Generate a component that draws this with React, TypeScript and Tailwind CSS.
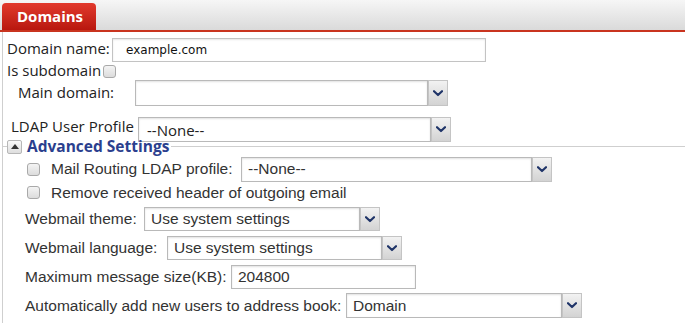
import React from "react";

const Chevron = () => (
  <svg width="10" height="7" viewBox="0 0 10 7">
    <path d="M1 1.2 L5 5 L9 1.2" fill="none" stroke="#1f3468" strokeWidth="2.2" strokeLinecap="round" strokeLinejoin="round" />
  </svg>
);

function Select({ w, h = 25, text, textClass = "" }: { w: number; h?: number; text?: string; textClass?: string }) {
  return (
    <div className="flex" style={{ height: h }}>
      <div
        className={`flex items-center border border-[#b9b9b9] bg-white pl-[6px] shadow-[inset_0_1px_2px_rgba(0,0,0,0.12)] ${textClass}`}
        style={{ width: w }}
      >
        {text}
      </div>
      <div className="flex w-[20px] items-center justify-center border border-[#c4c4c4] bg-gradient-to-b from-[#f2f2f2] to-[#d3d3d3]">
        <Chevron />
      </div>
    </div>
  );
}

const Check = () => (
  <div className="h-[13px] w-[13px] rounded-[3px] border border-[#a9a9a9] bg-gradient-to-b from-[#f4f4f4] to-[#dcdcdc]" />
);

export default function App() {
  const top = "font-['Open_Sans',sans-serif] text-[15px] text-[#222] leading-none";
  const low = "font-['Liberation_Sans',Arial,sans-serif] text-[15.5px] text-[#333] leading-none";
  return (
    <div className="h-[323px] w-[685px] overflow-hidden bg-white">
      <div className="flex h-[30px] items-end bg-gradient-to-b from-[#f6f6f6] to-[#dadada] pl-[2px]">
        <div className="flex h-[27px] w-[94px] items-center rounded-t-[4px] bg-gradient-to-b from-[#e2392c] to-[#b8160e] pl-[15px] font-['Open_Sans',sans-serif] text-[15px] font-bold text-white">
          Domains
        </div>
      </div>
      <div className="h-[2px] bg-[#c9341f]" />
      <div className="ml-[2px] border-l border-[#cfcfcf] pt-[6px]">
        <div className={`flex items-center ${top}`}>
          <span className="ml-[4px] -mt-[4px] w-[105px]">Domain name:</span>
          <div className="flex h-[24px] w-[374px] items-center border border-[#c3c3c3] pl-[13px] font-['DejaVu_Sans',sans-serif] text-[12px] text-[#111] shadow-[inset_0_1px_2px_rgba(0,0,0,0.1)]">
            example.com
          </div>
        </div>
        <div className={`mt-[1px] flex items-center ${top}`}>
          <span className="ml-[4px]">Is subdomain</span>
          <div className="ml-[2px] mt-[1px]">
            <Check />
          </div>
        </div>
        <div className={`mt-[2px] flex items-center ${top}`}>
          <span className="ml-[15px] -mt-[2px] w-[117px]">Main domain:</span>
          <Select w={293} h={26} />
        </div>
        <div className={`mt-[11px] flex items-center ${top}`}>
          <span className="ml-[8px] -mt-[6px] w-[127px]">LDAP User Profile</span>
          <Select w={293} h={25} text="--None--" textClass="pl-[8px] pt-[2px]" />
        </div>
        <fieldset className="mt-[-3px] border-t border-[#cfcfcf] pb-[10px]">
          <legend className="ml-[4px] flex items-center pr-[2px]">
            <div className="flex h-[14px] w-[15px] items-center justify-center rounded-[2px] border border-[#b7b7b7] bg-gradient-to-b from-[#fafafa] to-[#dedede]">
              <svg width="8" height="5" viewBox="0 0 8 5">
                <path d="M0 5 L4 0 L8 5 Z" fill="#333" />
              </svg>
            </div>
            <span className="ml-[5px] font-['Open_Sans',sans-serif] text-[15.5px] font-bold leading-none text-[#2b3f8e]">
              Advanced Settings
            </span>
          </legend>
          <div className={`mt-[2px] flex items-center ${low}`}>
            <div className="ml-[24px] mr-[11px]">
              <Check />
            </div>
            <span className="w-[190px]">Mail Routing LDAP profile:</span>
            <Select w={291} h={25} text="--None--" />
          </div>
          <div className={`mt-[3px] flex items-center ${low}`}>
            <div className="ml-[24px] mr-[11px]">
              <Check />
            </div>
            <span>Remove received header of outgoing email</span>
          </div>
          <div className={`mt-[7px] flex items-center ${low}`}>
            <span className="ml-[22px] w-[119px]">Webmail theme:</span>
            <Select w={216} h={24} text="Use system settings" />
          </div>
          <div className={`mt-[5px] flex items-center ${low}`}>
            <span className="ml-[22px] w-[142px]">Webmail language:</span>
            <Select w={215} h={24} text="Use system settings" />
          </div>
          <div className={`mt-[5px] flex items-center ${low}`}>
            <span className="ml-[22px] w-[206px]">Maximum message size(KB):</span>
            <div className="flex h-[24px] w-[185px] items-center border border-[#b9b9b9] pl-[6px] shadow-[inset_0_1px_2px_rgba(0,0,0,0.12)]">
              204800
            </div>
          </div>
          <div className={`mt-[4px] flex items-center ${low}`}>
            <span className="ml-[22px] w-[321px]">Automatically add new users to address book:</span>
            <Select w={216} h={25} text="Domain" />
          </div>
        </fieldset>
      </div>
    </div>
  );
}
